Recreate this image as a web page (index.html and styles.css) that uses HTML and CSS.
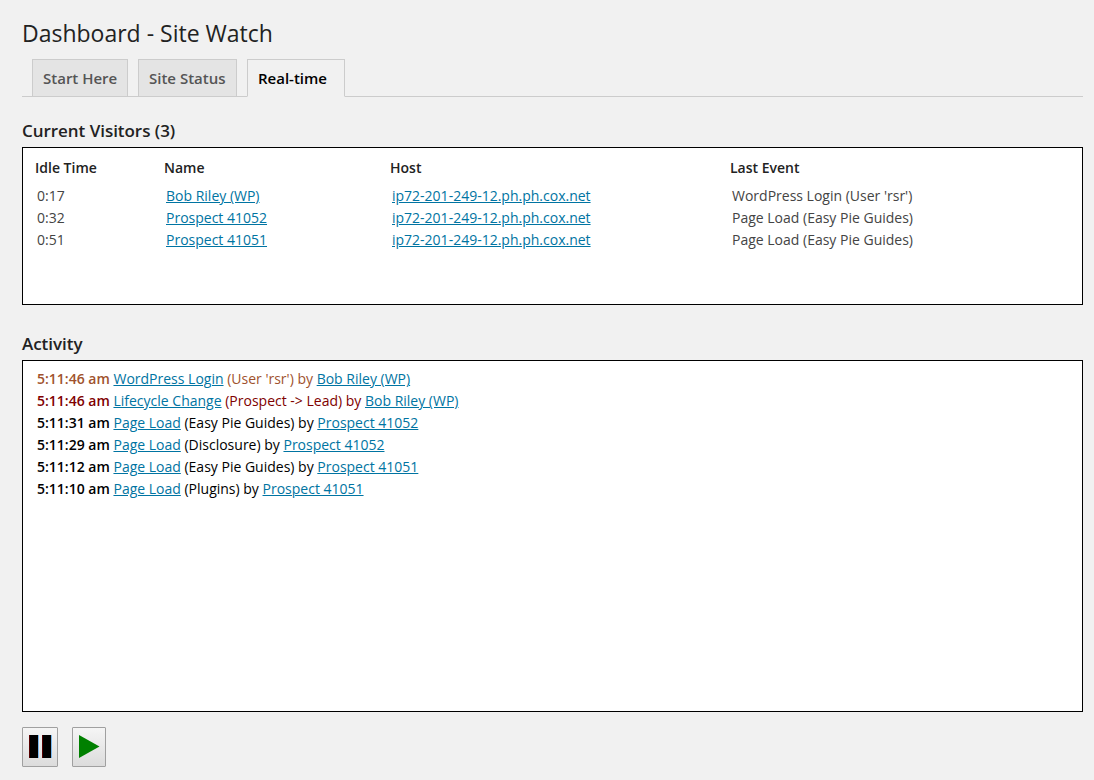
FILE: index.html
```html
<!DOCTYPE html>
<html lang="en">
<head>
<meta charset="utf-8">
<title>Dashboard - Site Watch</title>
<link rel="stylesheet" href="styles.css">
</head>
<body>
<h1 class="title"><span>Dashboard - Site Watch</span></h1>
<nav class="tabs">
  <a class="tab start"><span>Start Here</span></a>
  <a class="tab status"><span>Site Status</span></a>
  <a class="tab active"><span>Real-time</span></a>
</nav>
<h2 class="heading"><span>Current Visitors (3)</span></h2>
<section class="panel visitors">
  <div class="row head"><span>Idle Time</span><span>Name</span><span>Host</span><span>Last Event</span></div>
  <div class="row"><span>0:17</span><span><a href="#">Bob Riley (WP)</a></span><span><a href="#">ip72-201-249-12.ph.ph.cox.net</a></span><span>WordPress Login (User 'rsr')</span></div>
  <div class="row"><span>0:32</span><span><a href="#">Prospect 41052</a></span><span><a href="#">ip72-201-249-12.ph.ph.cox.net</a></span><span>Page Load (Easy Pie Guides)</span></div>
  <div class="row"><span>0:51</span><span><a href="#">Prospect 41051</a></span><span><a href="#">ip72-201-249-12.ph.ph.cox.net</a></span><span>Page Load (Easy Pie Guides)</span></div>
</section>
<h2 class="heading activity-heading"><span>Activity</span></h2>
<section class="panel activity">
  <div class="event login"><b>5:11:46 am</b> <a href="#">WordPress Login</a> (User 'rsr') by <a href="#">Bob Riley (WP)</a></div>
  <div class="event lifecycle"><b>5:11:46 am</b> <a href="#">Lifecycle Change</a> (Prospect -&gt; Lead) by <a href="#">Bob Riley (WP)</a></div>
  <div class="event"><b>5:11:31 am</b> <a href="#">Page Load</a> (Easy Pie Guides) by <a href="#">Prospect 41052</a></div>
  <div class="event"><b>5:11:29 am</b> <a href="#">Page Load</a> (Disclosure) by <a href="#">Prospect 41052</a></div>
  <div class="event"><b>5:11:12 am</b> <a href="#">Page Load</a> (Easy Pie Guides) by <a href="#">Prospect 41051</a></div>
  <div class="event"><b>5:11:10 am</b> <a href="#">Page Load</a> (Plugins) by <a href="#">Prospect 41051</a></div>
</section>
<div class="controls">
  <button class="control pause" aria-label="Pause"><svg width="34" height="38"><path d="M6 7h9v23H6zM19 7h9v23H19z" fill="#000"/><path d="M6.500 7v23M19.500 7v23" stroke="#500"/><path d="M15.500 7v23M28.500 7v23" stroke="#7ab8ee"/></svg></button>
  <button class="control play" aria-label="Play"><svg width="32" height="38"><path d="M6 7L26.500 18.500L6 30z" fill="#008000"/></svg></button>
</div>
</body>
</html>
```
FILE: styles.css
```css
* { box-sizing: border-box; }
body {
  margin: 0;
  padding: 16px 11px 0 22px;
  height: 780px;
  overflow: hidden;
  background: #f1f1f1;
  color: #444;
  font: 14px/22px "Open Sans", sans-serif;
}
a { color: #0074a2; }
.title { margin: 0; height: 43px; font-size: 23px; line-height: 35px; font-weight: 400; color: #222; }
.tabs { display: flex; gap: 10px; height: 38px; padding-left: 10px; border-bottom: 1px solid #ccc; }
.tab {
  height: 38px;
  padding: 0 10px;
  border: 1px solid #ccc;
  background: #e4e4e4;
  color: #555;
  font-size: 15px;
  line-height: 37px;
  font-weight: 600;
  white-space: nowrap;
}
.start { width: 96px; }
.status { width: 99px; }
.active { width: 98px; background: #f1f1f1; border-bottom-color: #f1f1f1; color: #000; }
.heading { margin: 0; padding-top: 23px; height: 50px; font-size: 17px; letter-spacing: -0.04px; font-weight: 600; color: #222; }
.panel { background: #fff; border: 1px solid #000; }
.visitors { height: 158px; padding-top: 9px; }
.row { display: grid; grid-template-columns: 129px 226px 340px 1fr; padding-left: 14px; }
.head { padding-left: 12px; height: 28px; color: #222; font-weight: 600; }
.activity-heading { height: 55px; padding-top: 28px; }
.activity { height: 352px; padding: 7px 14px; }
.event { color: #000; }
.event b { font-weight: 600; }
.login { color: #a0522d; }
.lifecycle { color: #800000; }
.controls { display: flex; gap: 14px; padding-top: 15px; }
.control {
  height: 40px;
  padding: 0;
  border: 1px solid #a0a0a0;
  border-radius: 1px;
  background: linear-gradient(#f5f5f5, #dcdcdc);
}
.control svg { display: block; }
.pause { width: 36px; }
.play { width: 34px; }
```
